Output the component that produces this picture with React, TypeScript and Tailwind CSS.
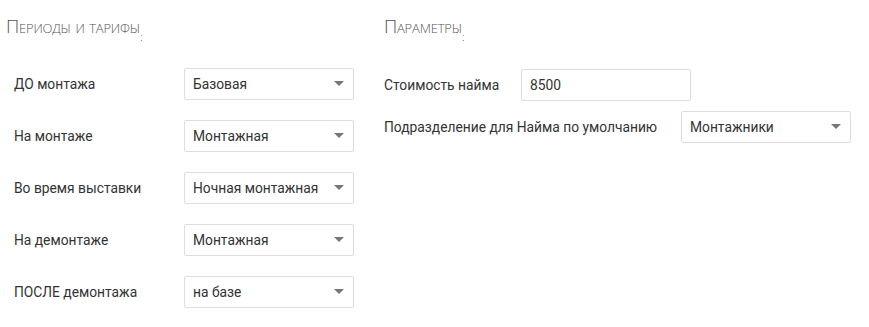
import { ReactNode } from 'react';

function Heading({ children }: { children: ReactNode }) {
  return (
    <h2 className="text-[18.5px] leading-[20px] font-light text-[#555] [font-variant:small-caps] font-['Open_Sans',sans-serif] tracking-[-0.2px]">
      {children}
      <span className="relative top-[8px] text-[11px] text-[#444]">:</span>
    </h2>
  );
}

function Select({ value }: { value: string }) {
  return (
    <div className="flex items-center justify-between w-[170px] h-[32px] border border-[#ddd] rounded-[2px] bg-white pl-[8px] pr-[8px] text-[13.8px] text-[#333]">
      <span>{value}</span>
      <svg width="10" height="6" viewBox="0 0 10 6" className="mr-[1px]">
        <path d="M0 0 L10 0 L5 5 Z" fill="#777" />
      </svg>
    </div>
  );
}

function Input({ value }: { value: string }) {
  return (
    <div className="flex items-center w-[170px] h-[32px] border border-[#ddd] rounded-[2px] bg-white px-[8px] text-[13.8px] text-[#333]">
      {value}
    </div>
  );
}

const periods = [
  { label: 'ДО монтажа', value: 'Базовая' },
  { label: 'На монтаже', value: 'Монтажная' },
  { label: 'Во время выставки', value: 'Ночная монтажная' },
  { label: 'На демонтаже', value: 'Монтажная' },
  { label: 'ПОСЛЕ демонтажа', value: 'на базе' },
];

export default function App() {
  return (
    <div className="w-[869px] h-[327px] bg-white font-['Roboto',sans-serif] text-[13.8px] text-[#333] flex">
      <div className="w-[384px] pl-[6px] pt-[16px]">
        <Heading>Периоды и тарифы</Heading>
        <div className="mt-[29px] pl-[8px] flex flex-col gap-[20px]">
          {periods.map((p) => (
            <div key={p.label} className="flex items-center">
              <div className="w-[170px]">{p.label}</div>
              <Select value={p.value} />
            </div>
          ))}
        </div>
      </div>
      <div className="pt-[16px]">
        <Heading>Параметры</Heading>
        <div className="mt-[30px] flex flex-col gap-[10px]">
          <div className="flex items-center">
            <div className="w-[137px]">Стоимость найма</div>
            <Input value="8500" />
          </div>
          <div className="flex items-center">
            <div className="w-[297px]">Подразделение для Найма по умолчанию</div>
            <Select value="Монтажники" />
          </div>
        </div>
      </div>
    </div>
  );
}
